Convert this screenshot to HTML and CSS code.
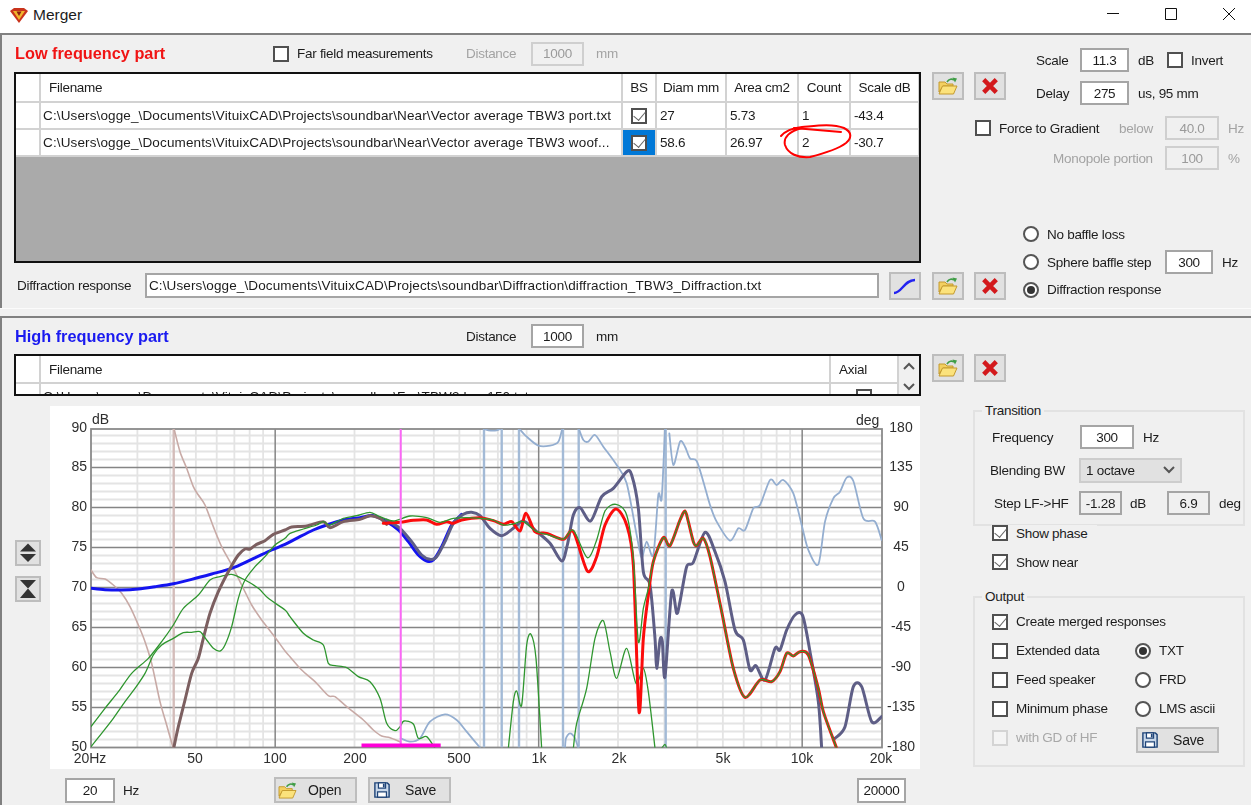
FILE: index.html
```html
<!DOCTYPE html>
<html lang="en">
<head>
    <meta charset="UTF-8">
    <title>Merger</title>
    <link rel="stylesheet" href="styles.css">
</head>
<body>
    <svg class="defs" width="0" height="0">
        <symbol id="ico-folder" viewBox="0 0 20 18">
            <path d="M1 15V5h6l2 2h6v2H5z" fill="#f3d060" stroke="#c49a2e"/>
            <path d="M4.500 9H19l-3.500 8H1z" fill="#fbe27c" stroke="#c49a2e"/>
            <path d="M9 5C11 2 14 1.500 16 3" fill="none" stroke="#3f9d46" stroke-width="1.600"/>
            <path d="M14.500 .5L19 1.500 17 5.500z" fill="#3f9d46"/>
        </symbol>
        <symbol id="ico-delete" viewBox="0 0 20 20">
            <path d="M3 3L17 17M17 3L3 17" fill="none" stroke="#d3191c" stroke-width="5"/>
        </symbol>
        <symbol id="ico-curve" viewBox="0 0 24 18">
            <path d="M1 16C9 16 11 3 22 3" fill="none" stroke="#2323f0" stroke-width="2.400"/>
        </symbol>
        <symbol id="ico-save" viewBox="0 0 18 18">
            <path d="M1 1h14l2 2v14H1z" fill="#c9d8ea" stroke="#1f4478" stroke-width="1.600"/>
            <path d="M5 1h8v6H5zM4 11h10v6H4z" fill="#fff" stroke="#1f4478" stroke-width="1.400"/>
            <path d="M10 2h2v4h-2z" fill="#1f4478"/>
        </symbol>
    </svg>

    <div class="window">
        <div class="titlebar">
            <svg class="logo" viewBox="0 0 18 15">
                <path d="M0 3L4 0H14L18 3 9 15z" fill="#c9331c"/>
                <path d="M3 3H15L9 12z" fill="#f1b52c"/>
                <path d="M6.500 3.500H11.500L9 8z" fill="#8c1d12"/>
            </svg>
            <span class="title-text">Merger</span>
            <div class="win-controls">
                <svg class="win-icon" viewBox="0 0 12 12"><path d="M0 5.500H12"/></svg>
                <svg class="win-icon" viewBox="0 0 12 12"><path d="M.5 .5H11.500V11.500H.5z"/></svg>
                <svg class="win-icon" viewBox="0 0 12 12"><path d="M0 0L12 12M12 0L0 12"/></svg>
            </div>
        </div>

        <!-- low frequency part -->
        <div class="panel low-panel">
            <div class="low-left">
                <div class="head-row">
                    <span class="part-title red">Low frequency part</span>
                    <span class="check"></span>
                    <span class="far-label">Far field measurements</span>
                    <span class="dist-label off">Distance</span>
                    <input class="field off dist-input" value="1000" readonly>
                    <span class="mm off">mm</span>
                </div>
                <div class="grid-box low-grid">
                    <table class="grid">
                        <colgroup>
                            <col class="c-head"><col class="c-file"><col class="c-bs"><col class="c-diam"><col class="c-area"><col class="c-count"><col class="c-scale">
                        </colgroup>
                        <tr>
                            <th></th><th class="pad">Filename</th><th class="mid">BS</th><th class="mid">Diam mm</th><th class="mid">Area cm2</th><th class="mid">Count</th><th class="mid">Scale dB</th>
                        </tr>
                        <tr>
                            <td></td><td class="path">C:\Users\ogge_\Documents\VituixCAD\Projects\soundbar\Near\Vector average TBW3 port.txt</td>
                            <td class="mid"><span class="check on"></span></td><td>27</td><td>5.73</td><td>1</td><td>-43.4</td>
                        </tr>
                        <tr>
                            <td></td><td class="path">C:\Users\ogge_\Documents\VituixCAD\Projects\soundbar\Near\Vector average TBW3 woof...</td>
                            <td class="mid selected"><span class="check on"></span></td><td>58.6</td><td>26.97</td><td>2</td><td>-30.7</td>
                        </tr>
                    </table>
                </div>
                <div class="diff-row">
                    <span class="diff-label">Diffraction response</span>
                    <input class="field diff-input" value="C:\Users\ogge_\Documents\VituixCAD\Projects\soundbar\Diffraction\diffraction_TBW3_Diffraction.txt" readonly>
                    <button class="tool-btn curve-btn"><svg class="ico-curve"><use href="#ico-curve"/></svg></button>
                </div>
            </div>

            <div class="low-right">
                <div class="low-top">
                    <div class="btn-pair top-pair">
                        <button class="tool-btn"><svg class="ico"><use href="#ico-folder"/></svg></button>
                        <button class="tool-btn"><svg class="ico"><use href="#ico-delete"/></svg></button>
                    </div>
                    <div class="scale-box">
                        <div class="line">
                            <span class="scale-label">Scale</span>
                            <input class="field w49" value="11.3" readonly>
                            <span class="scale-unit">dB</span>
                            <span class="check"></span>
                            <span class="after-check">Invert</span>
                        </div>
                        <div class="line delay-line">
                            <span class="scale-label">Delay</span>
                            <input class="field w49" value="275" readonly>
                            <span class="scale-unit">us, 95 mm</span>
                        </div>
                    </div>
                </div>
                <div class="force-box">
                    <div class="line">
                        <span class="check"></span>
                        <span class="force-label">Force to Gradient</span>
                        <span class="below-label off">below</span>
                        <input class="field off w54" value="40.0" readonly>
                        <span class="unit off">Hz</span>
                    </div>
                    <div class="line mono-line">
                        <span class="mono-label off">Monopole portion</span>
                        <input class="field off w54" value="100" readonly>
                        <span class="unit off">%</span>
                    </div>
                </div>
                <div class="low-bottom">
                    <div class="btn-pair bottom-pair">
                        <button class="tool-btn"><svg class="ico"><use href="#ico-folder"/></svg></button>
                        <button class="tool-btn"><svg class="ico"><use href="#ico-delete"/></svg></button>
                    </div>
                    <div class="baffle">
                        <div class="line"><span class="radio"></span><span class="after-check">No baffle loss</span></div>
                        <div class="line">
                            <span class="radio"></span><span class="after-check sphere-label">Sphere baffle step</span>
                            <input class="field w48" value="300" readonly><span class="unit">Hz</span>
                        </div>
                        <div class="line"><span class="radio on"></span><span class="after-check">Diffraction response</span></div>
                    </div>
                </div>
            </div>
        </div>

        <div class="splitter"></div>

        <!-- high frequency part -->
        <div class="panel high-panel">
            <div class="high-left">
                <div class="head-row high-head">
                    <span class="part-title blue">High frequency part</span>
                    <span class="high-gap"></span>
                    <span class="dist-label">Distance</span>
                    <input class="field dist-input" value="1000" readonly>
                    <span class="mm">mm</span>
                </div>
                <div class="grid-box high-grid">
                    <table class="grid">
                        <colgroup>
                            <col class="c-head"><col class="c-hfile"><col class="c-axial">
                        </colgroup>
                        <tr><th></th><th class="pad">Filename</th><th class="axial-head">Axial</th></tr>
                        <tr>
                            <td></td><td class="path">C:\Users\ogge_\Documents\VituixCAD\Projects\soundbar\Far\TBW3 hor 150.txt</td>
                            <td><span class="check axial-check"></span></td>
                        </tr>
                    </table>
                    <div class="scrollbar">
                        <svg class="chev" viewBox="0 0 12 8"><path d="M1 7L6 2 11 7"/></svg>
                        <svg class="chev" viewBox="0 0 12 8"><path d="M1 1L6 6 11 1"/></svg>
                    </div>
                </div>

                <div class="graph-row">
                    <div class="zoom-tools">
                        <button class="zoom-btn"><svg viewBox="2 2 22 22"><path d="M13 3.500L21 11.500H5zM5 14H21L13 22z"/></svg></button>
                        <button class="zoom-btn"><svg viewBox="2 2 22 22"><path d="M5 4H21L13 12.500zM13 12.500L21 22H5z"/></svg></button>
                    </div>
                    <div class="chart">
                        <svg class="plot" viewBox="50 406 870 363" width="870" height="363">
                            <defs>
                                <clipPath id="plot-clip"><rect x="91" y="429" width="791" height="318.500"/></clipPath>
                            </defs>
                            <g id="grid-lines"></g>
                            <g id="curves" clip-path="url(#plot-clip)"></g>
                            <g class="axis-left">
                                <text x="87" y="432">90</text><text x="87" y="471">85</text><text x="87" y="511">80</text>
                                <text x="87" y="551">75</text><text x="87" y="591">70</text><text x="87" y="631">65</text>
                                <text x="87" y="671">60</text><text x="87" y="711">55</text><text x="87" y="751">50</text>
                            </g>
                            <g class="axis-right">
                                <text x="901" y="432">180</text><text x="901" y="471">135</text><text x="901" y="511">90</text>
                                <text x="901" y="551">45</text><text x="901" y="591">0</text><text x="901" y="631">-45</text>
                                <text x="901" y="671">-90</text><text x="901" y="711">-135</text><text x="901" y="751">-180</text>
                            </g>
                            <g class="axis-bottom">
                                <text x="90" y="763">20Hz</text><text x="195" y="763">50</text><text x="275" y="763">100</text>
                                <text x="355" y="763">200</text><text x="459" y="763">500</text><text x="539" y="763">1k</text>
                                <text x="619" y="763">2k</text><text x="723" y="763">5k</text><text x="802" y="763">10k</text>
                                <text x="881" y="763">20k</text>
                            </g>
                            <text class="axis-unit" x="92" y="424">dB</text>
                            <text class="axis-unit" x="856" y="425">deg</text>
                        </svg>
                    </div>
                </div>

                <div class="bottom-row">
                    <input class="field from-input" value="20" readonly>
                    <span class="from-unit">Hz</span>
                    <button class="text-btn open-btn"><svg class="ico-open"><use href="#ico-folder"/></svg><span>Open</span></button>
                    <button class="text-btn save-btn"><svg class="ico-save"><use href="#ico-save"/></svg><span>Save</span></button>
                    <input class="field to-input" value="20000" readonly>
                </div>
            </div>

            <div class="high-right">
                <div class="btn-pair">
                    <button class="tool-btn"><svg class="ico"><use href="#ico-folder"/></svg></button>
                    <button class="tool-btn"><svg class="ico"><use href="#ico-delete"/></svg></button>
                </div>

                <div class="group transition">
                    <span class="legend">Transition</span>
                    <div class="line">
                        <span class="freq-label">Frequency</span>
                        <input class="field w54" value="300" readonly>
                        <span class="unit">Hz</span>
                    </div>
                    <div class="line">
                        <span class="blend-label">Blending BW</span>
                        <div class="combo">1 octave<svg class="chev" viewBox="0 0 12 8"><path d="M1 1L6 6 11 1"/></svg></div>
                    </div>
                    <div class="line">
                        <span class="step-label">Step LF-&gt;HF</span>
                        <input class="field flat w43" value="-1.28" readonly>
                        <span class="step-unit">dB</span>
                        <input class="field flat w43" value="6.9" readonly>
                        <span class="unit">deg</span>
                    </div>
                </div>

                <div class="show-phase line"><span class="check on"></span><span class="after-check">Show phase</span></div>
                <div class="show-near line"><span class="check on"></span><span class="after-check">Show near</span></div>

                <div class="group output">
                    <span class="legend">Output</span>
                    <div class="line span-two"><span class="check on"></span><span class="after-check">Create merged responses</span></div>
                    <div class="line"><span class="check"></span><span class="after-check">Extended data</span></div>
                    <div class="line"><span class="radio on"></span><span class="after-check">TXT</span></div>
                    <div class="line"><span class="check"></span><span class="after-check">Feed speaker</span></div>
                    <div class="line"><span class="radio"></span><span class="after-check">FRD</span></div>
                    <div class="line"><span class="check"></span><span class="after-check">Minimum phase</span></div>
                    <div class="line"><span class="radio"></span><span class="after-check">LMS ascii</span></div>
                    <div class="line"><span class="check dim"></span><span class="after-check dim-text">with GD of HF</span></div>
                    <button class="text-btn output-save"><svg class="ico-save"><use href="#ico-save"/></svg><span>Save</span></button>
                </div>
            </div>
        </div>

        <!-- red pen marks on top of the Count cell -->
        <svg class="pen-mark" viewBox="0 0 80 40" width="80" height="40">
            <path d="M1 16C6 10 14 8 22 7 34 6 52 3 64 8 72 12 72 18 66 23 58 29 46 33 30 37 18 38 8 34 5 25 3 17 10 11 22 8"/>
            <path d="M14 8L61 12"/>
        </svg>
    </div>

    <script src="chart.js"></script>
</body>
</html>
```

FILE: styles.css
```css
* {
    box-sizing: border-box;
}

body {
    margin: 0;
    overflow: hidden;
    background-color: #f0f0f0;
    font-family: "Liberation Sans", Arial, sans-serif;
    font-size: 13.5px;
    letter-spacing: -0.28px;
    color: #1c1c1c;
}

.defs {
    position: absolute;
}

.window {
    position: relative;
    width: 1251px;
    height: 805px;
    overflow: hidden;
    display: flex;
    flex-direction: column;
    filter: blur(0.35px);
}

.titlebar {
    height: 33px;
    background-color: #fff;
    display: flex;
    align-items: center;
    flex-shrink: 0;
}

.logo {
    width: 18px;
    height: 15px;
    margin-left: 10px;
    margin-top: -3px;
}

.title-text {
    margin-left: 5px;
    margin-top: -3px;
    font-size: 15.5px;
    letter-spacing: 0;
}

.win-controls {
    margin-left: auto;
    margin-right: 16px;
    margin-top: -5px;
    display: flex;
    gap: 46px;
}

.win-icon {
    width: 12px;
    height: 12px;
    fill: none;
    stroke: #111;
    stroke-width: 1;
}

.panel {
    display: flex;
    border-top: 2px solid #808080;
    border-left: 2px solid #808080;
}

.low-panel {
    height: 275px;
    flex-shrink: 0;
}

.splitter {
    height: 8px;
    flex-shrink: 0;
    border-top: 1px solid #fbfbfb;
}

.high-panel {
    flex: 1;
}

.low-left,
.high-left {
    width: 930px;
    flex-shrink: 0;
    padding-left: 12px;
}

.line {
    display: flex;
    align-items: center;
    white-space: nowrap;
}

.off {
    color: #a3a3a3;
}

.red {
    color: #f01414;
}

.blue {
    color: #1a1af0;
}

/* head rows */
.head-row {
    height: 37px;
    display: flex;
    align-items: center;
}

.high-head {
    height: 36px;
}

.part-title {
    width: 258px;
    margin-left: 1px;
    font-size: 16.3px;
    font-weight: bold;
    letter-spacing: 0;
    white-space: nowrap;
}

.high-gap {
    width: 193px;
}

.far-label {
    width: 169px;
    margin-left: 8px;
}

.dist-label {
    width: 65px;
}

.dist-input {
    width: 53px;
}

.mm {
    margin-left: 12px;
}

/* inputs */
.field {
    height: 24px;
    padding: 0 2px;
    border: 2px solid #a5a5a5;
    background-color: #fff;
    font: inherit;
    letter-spacing: -0.3px;
    color: #1c1c1c;
    text-align: center;
    outline: none;
    flex-shrink: 0;
}

.field.off {
    border-color: #cfcfcf;
    background-color: #f0f0f0;
    color: #9a9a9a;
}

.field.flat {
    background-color: #f0f0f0;
}

.w43 { width: 43px; }
.w48 { width: 48px; }
.w49 { width: 49px; }
.w54 { width: 54px; }

.unit {
    margin-left: 9px;
}

/* grids */
.grid-box {
    width: 907px;
    border: 2px solid #111;
    background-color: #aaa;
    overflow: hidden;
}

.low-grid {
    height: 191px;
}

.high-grid {
    height: 42px;
    display: flex;
    background-color: #fff;
}

.grid {
    table-layout: fixed;
    border-collapse: collapse;
    background-color: #fff;
}

.low-grid .grid {
    width: 903px;
}

.high-grid .grid {
    width: 882px;
    flex-shrink: 0;
}

.c-head { width: 24px; }
.c-file { width: 582px; }
.c-bs { width: 34px; }
.c-diam { width: 70px; }
.c-area { width: 72px; }
.c-count { width: 52px; }
.c-scale { width: 69px; }
.c-hfile { width: 790px; }
.c-axial { width: 68px; }

.grid th,
.grid td {
    height: 27px;
    padding: 0 3px;
    border-right: 2px solid #d2d2d2;
    border-bottom: 2px solid #d2d2d2;
    font-weight: normal;
    text-align: left;
    white-space: nowrap;
    overflow: hidden;
}

.low-grid th {
    height: 28px;
}

.grid th.pad {
    padding-left: 8px;
}

.grid .path {
    padding-left: 2px;
    letter-spacing: 0.13px;
}

.grid .mid {
    text-align: center;
    padding: 0;
}

.grid .selected {
    background-color: #0078d7;
}

.axial-head {
    padding-left: 8px !important;
}

.axial-check {
    margin-left: 22px;
}

.scrollbar {
    width: 21px;
    background-color: #f0f0f0;
    display: flex;
    flex-direction: column;
    align-items: center;
    gap: 13px;
    padding-top: 6px;
}

/* check boxes and radios */
.check {
    display: inline-block;
    position: relative;
    width: 16px;
    height: 16px;
    flex-shrink: 0;
    border: 2px solid #505050;
    background-color: #fff;
    vertical-align: middle;
}

.check.on::after {
    content: "";
    position: absolute;
    left: 3px;
    top: -1px;
    width: 6px;
    height: 10px;
    border-right: 1.5px solid #666;
    border-bottom: 1.5px solid #666;
    transform: rotate(40deg);
}

.check.dim {
    border-color: #d4d4d4;
    background-color: #f4f4f4;
}

.radio {
    position: relative;
    width: 16px;
    height: 16px;
    flex-shrink: 0;
    border: 2px solid #555;
    border-radius: 50%;
    background-color: #fff;
}

.radio.on::after {
    content: "";
    position: absolute;
    left: 2px;
    top: 2px;
    width: 8px;
    height: 8px;
    border-radius: 50%;
    background-color: #333;
}

.after-check {
    margin-left: 8px;
}

.dim-text {
    color: #a8a8a8;
}

/* buttons */
.tool-btn,
.zoom-btn,
.text-btn {
    padding: 0;
    border: 2px solid #bdbdbd;
    background-color: #e1e1e1;
    display: flex;
    align-items: center;
    justify-content: center;
    flex-shrink: 0;
    font: inherit;
    color: #1c1c1c;
}

.tool-btn {
    width: 32px;
    height: 28px;
}

.ico {
    width: 20px;
    height: 18px;
}

.ico-curve {
    width: 24px;
    height: 18px;
}

.ico-open {
    width: 19px;
    height: 17px;
}

.ico-save {
    width: 16px;
    height: 16px;
}

.btn-pair {
    display: flex;
    gap: 10px;
}

.text-btn {
    width: 83px;
    height: 26px;
    justify-content: flex-start;
    padding-left: 4px;
    gap: 15px;
    font-size: 14px;
    letter-spacing: -0.2px;
}

.open-btn {
    padding-left: 2px;
    gap: 11px;
}

/* low panel, lower row */
.diff-row {
    height: 25px;
    margin-top: 10px;
    display: flex;
    align-items: center;
}

.diff-label {
    width: 128px;
    margin-left: 3px;
}

.diff-input {
    width: 734px;
    height: 25px;
    text-align: left;
    letter-spacing: 0.12px;
}

.curve-btn {
    margin-left: 10px;
}

/* low panel, right column */
.low-right {
    flex: 1;
}

.low-top {
    height: 81px;
    display: flex;
}

.top-pair {
    margin-top: 37px;
    align-self: flex-start;
}

.scale-box {
    margin-left: 30px;
    margin-top: 13px;
}

.scale-label {
    width: 44px;
}

.scale-unit {
    width: 29px;
    margin-left: 9px;
}

.delay-line {
    margin-top: 9px;
}

.force-box {
    margin-left: 43px;
}

.force-label {
    width: 120px;
    margin-left: 8px;
}

.below-label {
    width: 46px;
}

.mono-line {
    margin-top: 6px;
}

.mono-label {
    width: 190px;
    padding-left: 78px;
}

.low-bottom {
    margin-top: 50px;
    display: flex;
}

.bottom-pair {
    margin-top: 52px;
    align-self: flex-start;
}

.baffle {
    margin-left: 17px;
    display: grid;
    grid-template-rows: 28px 28px 27px;
}

.sphere-label {
    width: 118px;
}

/* high panel, graph */
.graph-row {
    margin-top: 10px;
    display: flex;
}

.zoom-tools {
    width: 26px;
    margin-left: 1px;
    margin-top: 134px;
    display: flex;
    flex-direction: column;
    gap: 10px;
}

.zoom-btn {
    width: 26px;
    height: 26px;
}

.zoom-btn svg {
    width: 22px;
    height: 22px;
    fill: #333;
}

.chart {
    width: 870px;
    height: 363px;
    margin-left: 9px;
    background-color: #fff;
}

.plot {
    display: block;
}

.plot text {
    font-size: 14px;
    letter-spacing: 0;
    fill: #2e2e2e;
}

.axis-left {
    text-anchor: end;
}

.axis-right,
.axis-bottom {
    text-anchor: middle;
}

.minor {
    stroke: #e4e4e4;
    stroke-width: 1.800;
}

.major {
    stroke: #858585;
    stroke-width: 1.500;
}

.frame {
    fill: none;
    stroke: #8a8a8a;
    stroke-width: 1.800;
}

.curve {
    fill: none;
    stroke-linejoin: round;
    stroke-linecap: round;
}

.c-lightblue { stroke: #94aed0; stroke-width: 1.800; }
.c-blueline { stroke: #a3bad6; stroke-width: 2.400; }
.c-rose { stroke: #c8aaa6; stroke-width: 1.600; }
.c-roseline { stroke: #d3bcb9; stroke-width: 2.400; }
.c-green { stroke: #2f962f; stroke-width: 1.300; }
.c-blue { stroke: #1414f0; stroke-width: 3; }
.c-brown { stroke: #7c5f60; stroke-width: 3; }
.c-red { stroke: #fb0c0c; stroke-width: 3; }
.c-slate { stroke: #5e5e86; stroke-width: 3; }
.c-cursor { stroke: #fb66f6; stroke-width: 2; }
.c-band { stroke: #ff00d8; stroke-width: 4; }

/* high panel, under the graph */
.bottom-row {
    margin-top: 8px;
    display: flex;
    align-items: center;
}

.from-input {
    width: 50px;
    height: 25px;
    margin-left: 51px;
}

.from-unit {
    width: 151px;
    margin-left: 8px;
}

.save-btn {
    margin-left: 11px;
}

.to-input {
    width: 49px;
    height: 25px;
    margin-left: 406px;
}

/* high panel, right column */
.high-right {
    flex: 1;
    padding-top: 36px;
}

.group {
    position: relative;
    width: 272px;
    margin-left: 41px;
    border: 2px solid #e2e2e2;
}

.legend {
    position: absolute;
    top: -9px;
    left: 7px;
    padding: 0 3px;
    background-color: #f0f0f0;
}

.transition {
    height: 116px;
    margin-top: 28px;
    padding-top: 13px;
    display: flex;
    flex-direction: column;
    gap: 9px;
}

.freq-label {
    width: 88px;
    margin-left: 17px;
}

.blend-label {
    width: 89px;
    margin-left: 15px;
}

.step-label {
    width: 85px;
    margin-left: 19px;
}

.step-unit {
    width: 37px;
    margin-left: 8px;
}

.transition .line {
    height: 24px;
}

.combo {
    width: 103px;
    height: 25px;
    padding: 0 5px;
    border: 2px solid #cdcdcd;
    background-color: #e1e1e1;
    display: flex;
    align-items: center;
    justify-content: space-between;
}

.chev {
    width: 12px;
    height: 8px;
    fill: none;
    stroke: #555;
    stroke-width: 2;
}

.show-phase {
    position: relative;
    width: 106px;
    height: 16px;
    margin-left: 59px;
    margin-top: -1px;
    padding-left: 1px;
    background-color: #f0f0f0;
}

.show-near {
    height: 16px;
    margin-left: 60px;
    margin-top: 13px;
}

.output {
    height: 171px;
    margin-top: 26px;
    padding-top: 9px;
    padding-left: 17px;
    display: grid;
    grid-template-columns: 143px 1fr;
    grid-template-rows: 29px 29px 29px 29px 29px;
    align-items: center;
}

.span-two {
    grid-column: 1 / 3;
}

.output-save {
    margin-left: 1px;
    margin-top: 5px;
}

/* pen annotation */
.pen-mark {
    position: absolute;
    left: 780px;
    top: 120px;
    fill: none;
    stroke: #f00;
    stroke-width: 2;
    stroke-linecap: round;
}
```

FILE: chart.js
```js
const SVG_NS = "http://www.w3.org/2000/svg";
const TOP = 429, BOTTOM = 747.5, LEFT = 91, RIGHT = 882;

function addEl(parent, tag, cls, attrs) {
    const el = document.createElementNS(SVG_NS, tag);
    el.setAttribute("class", cls);
    for (const k in attrs) el.setAttribute(k, attrs[k]);
    parent.appendChild(el);
}

function xOf(freq) {
    return LEFT + 263.5 * Math.log10(freq / 20);
}

// traced points are in 3x crop units, each crop has its own x origin
function pts(originX, str) {
    return str.trim().split(/\s+/).map(p => {
        const [x, y] = p.split(",").map(Number);
        return [originX + x / 3, 425 + y / 3];
    });
}

function smooth(points) {
    let d = `M${points[0][0]} ${points[0][1]}`;
    for (let i = 0; i < points.length - 1; i++) {
        const p0 = points[Math.max(i - 1, 0)], p1 = points[i];
        const p2 = points[i + 1], p3 = points[Math.min(i + 2, points.length - 1)];
        const c1 = [p1[0] + (p2[0] - p0[0]) / 7, p1[1] + (p2[1] - p0[1]) / 7];
        const c2 = [p2[0] - (p3[0] - p1[0]) / 7, p2[1] - (p3[1] - p1[1]) / 7];
        d += `C${c1[0]} ${c1[1]} ${c2[0]} ${c2[1]} ${p2[0]} ${p2[1]}`;
    }
    return d;
}

// grid
const grid = document.getElementById("grid-lines");
for (let db = 1; db < 40; db++) {
    const y = BOTTOM - db * 8;
    if (db % 5) addEl(grid, "line", "minor", { x1: LEFT, x2: RIGHT, y1: y, y2: y });
}
[30, 40, 50, 60, 70, 80, 90, 200, 300, 400, 500, 600, 700, 800, 900,
 2000, 3000, 4000, 5000, 6000, 7000, 8000, 9000].forEach(f => {
    addEl(grid, "line", "minor", { x1: xOf(f), x2: xOf(f), y1: TOP, y2: BOTTOM });
});
for (let db = 5; db < 40; db += 5) {
    const y = BOTTOM - db * 8;
    addEl(grid, "line", "major", { x1: LEFT, x2: RIGHT, y1: y, y2: y });
}
[100, 1000, 10000].forEach(f => addEl(grid, "line", "major", { x1: xOf(f), x2: xOf(f), y1: TOP, y2: BOTTOM }));
addEl(grid, "rect", "frame", { x: LEFT, y: TOP, width: RIGHT - LEFT, height: BOTTOM - TOP });

// crop origins
const A = 85, B = 280, C = 480, D = 680;

const redTail = "15,258 25,290 40,350 50,362 70,340 90,395 125,560 160,730 195,817 240,765 275,770 300,740 320,685 340,693 360,680 385,690 415,790 430,860 470,970";

const curves = [
    // HF phase
    ["c-lightblue", pts(B, "362,940 390,950 420,940 450,890 495,868 530,885 560,920 600,968")],
    ["c-lightblue", pts(C, "12,12 25,16 50,16 62,10")],
    ["c-lightblue", pts(C, "117,10 140,35 175,62 210,62 235,50 247,10")],
    ["c-lightblue", pts(C, "255,970 258,940 270,925 285,940 295,970")],
    ["c-lightblue", pts(C, "296,10 310,45 325,50 345,30 370,65 410,120 440,175 470,330 485,398 500,350 520,390 535,210 545,220 555,10")],
    ["c-lightblue", pts(C, "568,25 580,120 600,50").concat(pts(D, "15,65 30,100 50,108 70,170 90,240 110,290 150,347 175,310 195,315 220,250 240,240 270,165 290,180 310,165 340,205 365,300 385,375 415,418 435,290 460,220 480,200 500,158 520,168 550,280 585,290 605,345"))],
    // LF phase
    ["c-rose", pts(A, "18,435 35,458 60,462 85,480 110,505 135,545 160,600 180,650 200,715 225,830 245,900 262,960 266,970")],
    ["c-rose", pts(A, "268,15 285,80 305,130 325,185 340,210 360,240 385,305 410,365 440,420 470,480 500,540 530,585 565,630 600,678").concat(pts(B, "30,695 65,735 105,770 145,812 165,815 200,845 250,885 280,915 305,933 330,938 360,950"))],
    // far and near measurements
    ["c-green", pts(A, "18,905 60,850 100,800 140,745 190,700 230,650 265,600 295,550 340,510 375,465 405,455 440,448 480,465 520,490 550,520 600,555").concat(pts(B, "30,575 70,625 100,645 130,660 145,715 165,722 200,728 235,755 270,770 300,820 320,895 345,917 360,905 372,888 400,897 415,940 440,935 465,970"))],
    ["c-green", pts(C, "85,970 100,830 110,798 125,840 140,660 153,628 168,700 185,970")],
    ["c-green", pts(C, "280,970 290,895 320,790 345,640 370,587 390,680 410,760 440,670 468,775 490,730 505,800 525,970")],
    ["c-green", pts(C, "545,970 555,958 560,970")],
    ["c-blue", pts(A, "18,490 60,494 110,495 160,492 210,485 265,476 320,463 380,447 440,430 500,403 560,375 600,358").concat(pts(B, "50,340 100,315 140,300 190,285 240,278 280,272 320,290 355,315 385,350 415,390 440,408 460,405 485,365 515,300 545,268"))],
    ["c-brown", pts(A, "266,970 280,905 300,825 320,745 340,700 355,640 375,565 400,500 430,440 460,390 480,372 495,372 515,358 540,347 565,328 600,315").concat(pts(B, "35,306 80,303 130,290 150,308 190,290 240,283 270,272 300,280 320,298"))],
    ["c-slate", pts(B, "320,285 360,310 395,350 425,390 450,403 470,395 495,350 520,295 550,268 575,262 600,272").concat(pts(C, "30,310 65,332 100,310 130,288 170,320 210,355 245,408 262,360 280,270 300,248 332,288 365,215 400,190 440,140 455,150 475,250 490,440 510,480 525,640 530,730 540,645 547,650 555,755 575,500 590,565 600,530"), pts(D, "20,425 40,412 75,322 105,380 135,470 165,615 190,645 210,735 228,722 255,765 285,670 300,675 320,615 345,570 368,572 390,680 415,830 425,970"))],
    ["c-slate", pts(D, "465,940 495,905 520,785 545,785 575,890 605,875")],
    ["c-red", pts(B, "310,295 360,292 400,286 440,285 470,298 500,290 520,295 545,285 600,278").concat(pts(C, "40,287 70,298 95,290 120,318 138,265 165,320 200,325 250,343 280,320 322,438 350,395 375,300 408,252 440,300 460,420 477,860 490,640 505,510 520,410 550,338 570,362 600,285"), pts(D, redTail))],
    ["c-green", pts(A, "18,965 50,925 85,880 120,830 150,790 180,745 205,690 230,660 265,640 295,623 320,622 345,620 365,645 385,670 405,678 420,660 440,605 460,520 480,465 510,425 540,395 570,360 600,340").concat(pts(B, "30,325 70,312 110,300 130,290 150,300 190,280 230,272 270,262 300,275 340,288 390,273 440,278 480,292 520,280 560,278 600,280"), pts(C, "40,285 70,300 100,297 130,290 170,320 200,328 250,342 280,316 322,398 350,345 375,258 408,238 440,270 460,400 475,650 490,550 505,490 520,410 550,338 570,362 600,285"), pts(D, redTail))]
];

const box = document.getElementById("curves");

// phase wraps show up as straight drops
[484, 501.7, 519, 563, 578.7, 665.7].forEach(x => addEl(box, "line", "c-blueline", { x1: x, x2: x, y1: TOP, y2: BOTTOM }));
addEl(box, "line", "c-roseline", { x1: 173.7, x2: 173.7, y1: TOP, y2: BOTTOM });

curves.forEach(([cls, points]) => addEl(box, "path", "curve " + cls, { d: smooth(points) }));

addEl(box, "line", "c-cursor", { x1: 400.7, x2: 400.7, y1: TOP, y2: BOTTOM });
addEl(box, "line", "c-band", { x1: 361.5, x2: 440.7, y1: 745.5, y2: 745.5 });
```
